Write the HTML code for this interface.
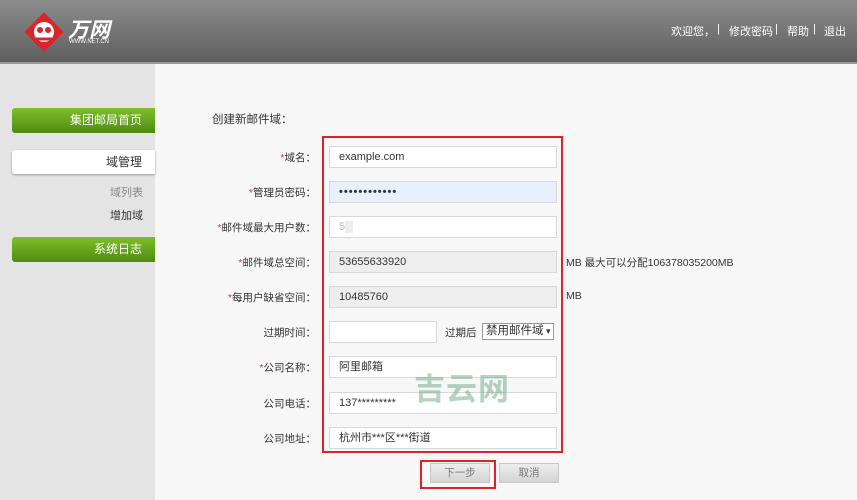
<!DOCTYPE html>
<html><head><meta charset="utf-8"><style>
body{margin:0;width:857px;height:500px;overflow:hidden;background:#f7f7f7;font-family:"Liberation Sans","Noto Sans CJK SC",sans-serif;font-size:11px;color:#333;position:relative}
.hdr{position:absolute;left:0;top:0;width:857px;height:62px;background:linear-gradient(#8c8c8c,#5f5f5f);border-bottom:2px solid #9a9a9a}
.hdr .h{position:absolute;top:23px;color:#fff;font-size:11px;white-space:nowrap}
.side{position:absolute;left:0;top:64px;width:155px;height:436px;background:#e4e4e4}
.g{position:absolute;left:12px;width:143px;height:25px;background:linear-gradient(#7fbf2a,#4f8a12);color:#fff;font-size:12px;text-align:right;box-sizing:border-box;padding-right:13px;line-height:25px;border-radius:3px 0 0 3px}
.w{position:absolute;left:12px;width:143px;height:24px;background:#fff;text-align:right;box-sizing:border-box;padding-right:13px;line-height:24px;font-size:12px;border-radius:3px 0 0 3px;box-shadow:0 1px 2px #999}
.a{position:absolute;text-align:right;right:0}
.lab{position:absolute;left:200px;width:116px;text-align:right;font-size:10.5px}
.lab b{color:#d33;font-weight:normal}
.in{position:absolute;left:329px;width:228px;height:22px;background:#fff;border:1px solid #d8d8d8;box-sizing:border-box;padding-left:9px;line-height:20px;font-size:11px}
.gr{background:#eee}
.t{position:absolute;font-size:10.5px;white-space:nowrap}
.btn{position:absolute;top:463px;width:60px;height:20px;background:linear-gradient(#eee,#d4d4d4);border:1px solid #c8c8c8;box-sizing:border-box;text-align:center;line-height:18px;color:#777;font-size:10.5px}
</style></head><body>
<div class="hdr">
<svg style="position:absolute;left:22px;top:10px" width="44" height="44" viewBox="0 0 44 44"><rect x="8" y="8" width="28" height="28" transform="rotate(45 22 22)" fill="#d8262c"/><circle cx="22" cy="22" r="10" fill="#fff"/><circle cx="18" cy="20" r="3" fill="#d8262c"/><circle cx="26" cy="20" r="3" fill="#d8262c"/><path d="M13 29 L31 29" stroke="#d8262c" stroke-width="3"/></svg>
<div style="position:absolute;left:68px;top:14px;color:#fff;font-size:21px;font-weight:bold;font-style:italic">万网</div>
<div style="position:absolute;left:69px;top:39px;color:#fff;font-size:6px">WWW.NET.CN</div>
<div class="h" style="left:671px">欢迎您，</div>
<div class="h" style="left:717px">|</div>
<div class="h" style="left:729px">修改密码</div>
<div class="h" style="left:775px">|</div>
<div class="h" style="left:787px">帮助</div>
<div class="h" style="left:813px">|</div>
<div class="h" style="left:824px">退出</div>
</div>
<div class="side">
<div class="g" style="top:44px">集团邮局首页</div>
<div class="w" style="top:86px">域管理</div>
<div class="a" style="top:120px;right:12px;color:#888">域列表</div>
<div class="a" style="top:143px;right:12px">增加域</div>
<div class="g" style="top:173px">系统日志</div>
</div>
<div class="t" style="left:212px;top:111px;font-size:11.5px">创建新邮件域：</div>
<div style="position:absolute;left:322px;top:136px;width:241px;height:317px;border:2px solid #d9252a;box-sizing:border-box"></div>
<div class="lab" style="top:150px"><b>*</b>域名：</div><div class="in" style="top:146px">example.com</div>
<div class="lab" style="top:185px"><b>*</b>管理员密码：</div><div class="in" style="top:181px;background:#e8f0fe;font-weight:bold;letter-spacing:1px">••••••••••••</div>
<div class="lab" style="top:220px"><b>*</b>邮件域最大用户数：</div><div class="in" style="top:216px;color:#bbb">5▒</div>
<div class="lab" style="top:255px"><b>*</b>邮件域总空间：</div><div class="in gr" style="top:251px">53655633920</div>
<div class="t" style="left:566px;top:255px">MB 最大可以分配106378035200MB</div>
<div class="lab" style="top:290px"><b>*</b>每用户缺省空间：</div><div class="in gr" style="top:286px">10485760</div>
<div class="t" style="left:566px;top:290px">MB</div>
<div class="lab" style="top:325px">过期时间：</div><div class="in" style="top:321px;width:108px"></div>
<div class="t" style="left:445px;top:325px">过期后</div>
<div style="position:absolute;left:482px;top:323px;width:72px;height:17px;border:1px solid #999;background:#fff;font-size:11.5px;line-height:15px;padding-left:3px;box-sizing:border-box;white-space:nowrap;overflow:hidden">禁用邮件域<span style="font-size:9px"> ▾</span></div>
<div class="lab" style="top:360px"><b>*</b>公司名称：</div><div class="in" style="top:356px">阿里邮箱</div>
<div class="lab" style="top:396px">公司电话：</div><div class="in" style="top:392px">137*********</div>
<div class="lab" style="top:431px">公司地址：</div><div class="in" style="top:427px">杭州市***区***街道</div>
<div style="position:absolute;left:414px;top:364px;color:rgba(120,175,140,.55);font-size:31px;font-weight:bold;letter-spacing:1px">吉云网</div>
<div style="position:absolute;left:420px;top:460px;width:76px;height:29px;border:2px solid #d9252a;box-sizing:border-box"></div>
<div class="btn" style="left:430px">下一步</div>
<div class="btn" style="left:499px">取消</div>
</body></html>
